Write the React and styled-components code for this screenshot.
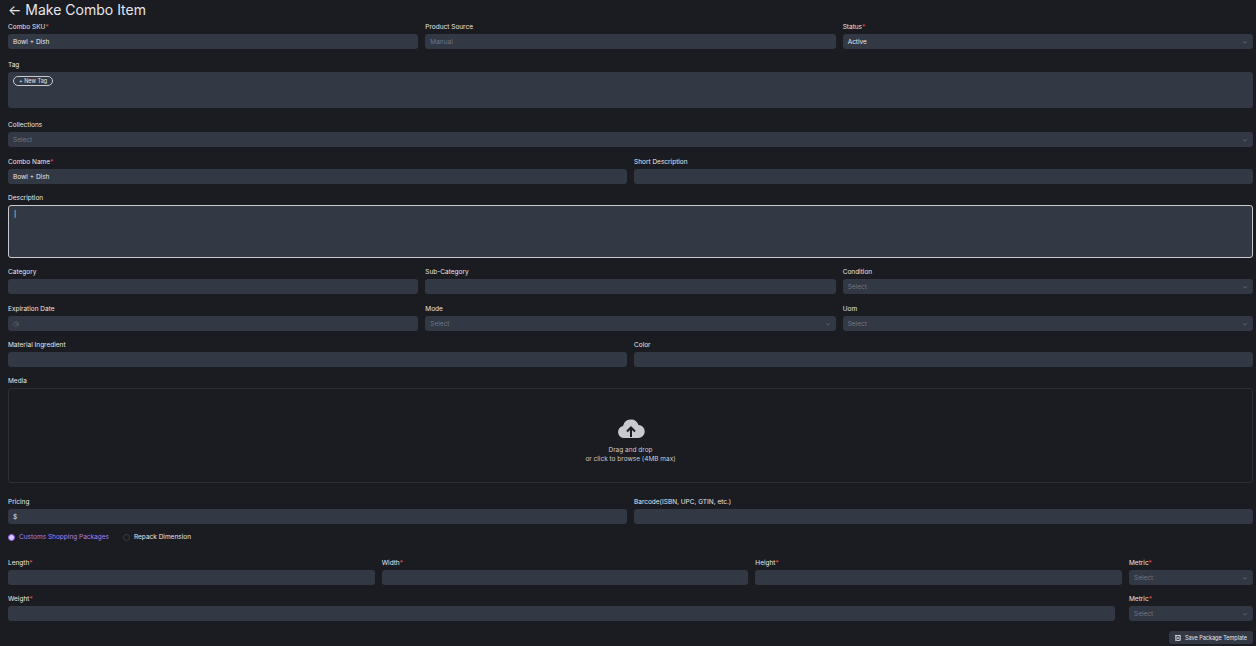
import React from "react";
import styled, { createGlobalStyle } from "styled-components";

const Global = createGlobalStyle`
  body { margin: 0; background: #1b1c22; font-family: Inter, "Liberation Sans", sans-serif; color: #e6e7ea; }
`;

const Page = styled.div`
  padding: 0 3px 0 8px;
  width: 1256px;
  box-sizing: border-box;
`;

const Title = styled.h1`
  margin: 0;
  height: 22px;
  font-size: 14px;
  font-weight: 400;
  line-height: 20px;
  display: flex;
  align-items: flex-start;
  gap: 4px;
`;

const Row = styled.div`
  display: grid;
  grid-template-columns: ${(p) => p.cols || "1fr"};
  column-gap: ${(p) => p.gap || 7}px;
  margin-bottom: ${(p) => (p.mb == null ? 12 : p.mb)}px;
`;

const Field = styled.div`
  display: flex;
  flex-direction: column;
`;

const Label = styled.label`
  font-size: 6.5px;
  line-height: 10px;
  height: 10px;
  margin-bottom: 2px;
  color: #e6e7ea;
  span { color: #e5484d; }
`;

const Input = styled.div`
  height: ${(p) => p.h || 15}px;
  background: #333845;
  border-radius: 3px;
  box-sizing: border-box;
  border: ${(p) => (p.focus ? "1px solid #c8cad0" : "none")};
  display: flex;
  align-items: ${(p) => (p.top ? "flex-start" : "center")};
  justify-content: space-between;
  padding: ${(p) => (p.top ? "4px 5px" : "0 5px")};
  font-size: 6.5px;
  color: ${(p) => (p.muted ? "#717684" : "#e6e7ea")};
`;

const Chevron = () => (
  <svg width="6" height="6" viewBox="0 0 10 10" fill="none" stroke="#717684" strokeWidth="1.2">
    <path d="M2 4l3 3 3-3" />
  </svg>
);

const TagBtn = styled.div`
  border: 1px solid #c8cad0;
  border-radius: 6px;
  padding: 1px 5px;
  font-size: 5.5px;
  color: #e6e7ea;
`;

const Drop = styled.div`
  height: 95px;
  border: 1px solid #2b2e37;
  border-radius: 3px;
  display: flex;
  flex-direction: column;
  align-items: center;
  justify-content: center;
  font-size: 6.5px;
  line-height: 9px;
  color: #c8cad0;
  padding-top: 10px;
  box-sizing: border-box;
`;

const Radios = styled.div`
  display: flex;
  gap: 14px;
  align-items: center;
  height: 10px;
  margin: 8px 0 16px;
  font-size: 6.5px;
`;

const Radio = styled.div`
  display: flex;
  align-items: center;
  gap: 4px;
  color: ${(p) => (p.on ? "#a97ff0" : "#e6e7ea")};
  &::before {
    content: "";
    width: 5px;
    height: 5px;
    border-radius: 50%;
    background: ${(p) => (p.on ? "#d9c7fb" : "transparent")};
    border: ${(p) => (p.on ? "1px solid #8d5cf0" : "1px solid #3a3d47")};
  }
`;

const Footer = styled.div`
  display: flex;
  justify-content: flex-end;
`;

const SaveBtn = styled.div`
  background: #333845;
  border-radius: 3px;
  height: 13px;
  width: 84px;
  display: flex;
  align-items: center;
  justify-content: center;
  gap: 4px;
  font-size: 5.5px;
  color: #e6e7ea;
`;

const F = ({ label, req, children, ...rest }) => (
  <Field>
    <Label>
      {label}
      {req && <span>*</span>}
    </Label>
    <Input {...rest}>{children}</Input>
  </Field>
);

const Sel = ({ label, req, text = "Select" }) => (
  <F label={label} req={req} muted>
    {text}
    <Chevron />
  </F>
);

export default function App() {
  return (
    <Page>
      <Global />
      <Title>
        <span>←</span> Make Combo Item
      </Title>
      <Row cols="1fr 1fr 1fr" mb={11}>
        <F label="Combo SKU" req>Bowl + Dish</F>
        <F label="Product Source" muted>Manual</F>
        <F label="Status" req>Active<Chevron /></F>
      </Row>
      <Row mb={12}>
        <F label="Tag" h={36} top>
          <TagBtn>+ New Tag</TagBtn>
        </F>
      </Row>
      <Row mb={10}>
        <Sel label="Collections" />
      </Row>
      <Row cols="1fr 1fr" mb={9}>
        <F label="Combo Name" req>Bowl + Dish</F>
        <F label="Short Description" />
      </Row>
      <Row mb={9}>
        <F label="Description" h={53} focus top>|</F>
      </Row>
      <Row cols="1fr 1fr 1fr" mb={10}>
        <F label="Category" />
        <F label="Sub-Category" />
        <Sel label="Condition" />
      </Row>
      <Row cols="1fr 1fr 1fr" mb={9}>
        <F label="Expiration Date" muted>◷</F>
        <Sel label="Mode" />
        <Sel label="Uom" />
      </Row>
      <Row cols="1fr 1fr" mb={9}>
        <F label="Material Ingredient" />
        <F label="Color" />
      </Row>
      <Row mb={14}>
        <Field>
          <Label>Media</Label>
          <Drop>
            <svg width="28" height="22" viewBox="0 0 28 22">
              <path
                d="M7 20a6 6 0 0 1-1-11.9A8 8 0 0 1 21.5 7 6.5 6.5 0 0 1 21 20z"
                fill="#c8cad0"
              />
              <path d="M14 19v-9M10 13.5l4-4 4 4" stroke="#1b1c22" strokeWidth="2" fill="none" />
            </svg>
            <div style={{ marginTop: 6 }}>Drag and drop</div>
            <div>or click to browse (4MB max)</div>
          </Drop>
        </Field>
      </Row>
      <Row cols="1fr 1fr" mb={0}>
        <F label="Pricing">$</F>
        <F label="Barcode(ISBN, UPC, GTIN, etc.)" />
      </Row>
      <Radios>
        <Radio on>Customs Shopping Packages</Radio>
        <Radio>Repack Dimension</Radio>
      </Radios>
      <Row cols="1fr 1fr 1fr 124px" gap={7} mb={9}>
        <F label="Length" req />
        <F label="Width" req />
        <F label="Height" req />
        <Sel label="Metric" req />
      </Row>
      <Row cols="1fr 124px" gap={14} mb={10}>
        <F label="Weight" req />
        <Sel label="Metric" req />
      </Row>
      <Footer>
        <SaveBtn>
          <svg width="6" height="6" viewBox="0 0 10 10" fill="none" stroke="#e6e7ea" strokeWidth="1">
            <rect x="1" y="1" width="8" height="8" />
            <rect x="3" y="1" width="4" height="3" />
            <rect x="3" y="6" width="4" height="3" />
          </svg>
          Save Package Template
        </SaveBtn>
      </Footer>
    </Page>
  );
}
